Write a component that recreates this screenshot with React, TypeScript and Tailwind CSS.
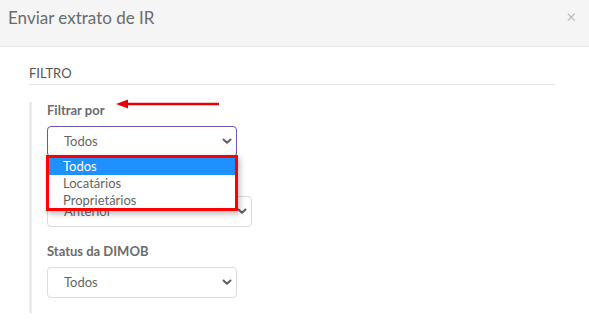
import React from "react";

function Chevron() {
  return (
    <svg width="10" height="7" viewBox="0 0 10 7" className="shrink-0">
      <path d="M1.5 1.5 L5 4.8 L8.5 1.5" fill="none" stroke="#5f5f5f" strokeWidth="2" strokeLinecap="round" strokeLinejoin="round" />
    </svg>
  );
}

function SelectBox({ value, width, focused }: { value: string; width: string; focused?: boolean }) {
  return (
    <div
      className={`${width} h-[31px] flex items-center justify-between pl-[16px] pr-[4px] rounded-[4px] border bg-white ${
        focused ? "border-[#6c57a6]" : "border-[#dcdcdc]"
      }`}
    >
      <span className="text-[13px] text-[#666]">{value}</span>
      <Chevron />
    </div>
  );
}

export default function App() {
  return (
    <div
      className="relative w-[589px] h-[326px] bg-white overflow-hidden"
      style={{ fontFamily: "Lato, 'Open Sans', sans-serif" }}
    >
      <div className="h-[47px] bg-[#f5f5f5] border-b border-[#e6e6e6] flex items-start justify-between pl-[8px] pr-[13px] pt-[6px]">
        <span className="text-[17px] leading-[24px] text-[#6b6b6b]">Enviar extrato de IR</span>
        <span className="text-[17px] leading-[20px] text-[#bdbdbd] mt-[1px]">×</span>
      </div>

      <div className="pl-[29px] pr-[34px]">
        <div className="mt-[18px] pb-[3px] border-b border-[#e3e3e3] text-[13px] leading-[16px] text-[#555]">
          FILTRO
        </div>

        <div className="mt-[17px] border-l-[3px] border-[#ececec] pl-[15px] pb-[15px]">
          <div className="text-[13px] leading-[16px] font-bold text-[#6b6b6b]">Filtrar por</div>
          <div className="mt-[8px]">
            <SelectBox value="Todos" width="w-[190px]" focused />
          </div>
          <div className="mt-[16px] h-[16px]" />
          <div className="mt-[7px]">
            <SelectBox value="Anterior" width="w-[205px]" />
          </div>
          <div className="mt-[16px] text-[13px] leading-[16px] font-bold text-[#6b6b6b]">Status da DIMOB</div>
          <div className="mt-[8px]">
            <SelectBox value="Todos" width="w-[190px]" />
          </div>
        </div>
      </div>

      {/* red annotation arrow */}
      <svg className="absolute left-[114px] top-[98px]" width="108" height="12" viewBox="0 0 108 12">
        <line x1="10" y1="6" x2="105" y2="6" stroke="#e8000b" strokeWidth="2.5" />
        <path d="M2 6 L14 1.5 L14 10.5 Z" fill="#e8000b" />
      </svg>

      {/* opened dropdown list */}
      <div className="absolute left-[46px] top-[155px] w-[192px] h-[56px] border-[3px] border-[#ff0000] bg-white shadow-[2px_3px_6px_rgba(0,0,0,0.25)] flex flex-col">
        <div className="h-[17px] bg-[#1e90ff] text-white text-[13px] leading-[17px] pl-[14px]">Todos</div>
        <div className="h-[17px] text-[#666] text-[13px] leading-[17px] pl-[14px]">Locatários</div>
        <div className="h-[17px] text-[#666] text-[13px] leading-[17px] pl-[14px]">Proprietários</div>
      </div>
    </div>
  );
}
